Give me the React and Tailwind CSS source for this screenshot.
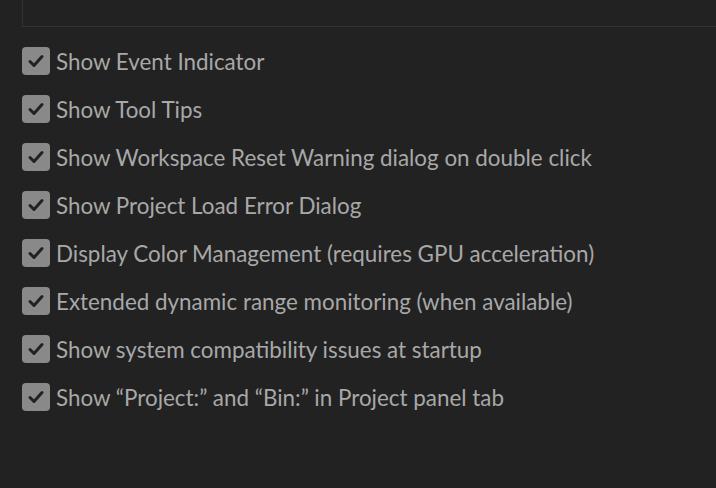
import React from 'react';

const items = [
  'Show Event Indicator',
  'Show Tool Tips',
  'Show Workspace Reset Warning dialog on double click',
  'Show Project Load Error Dialog',
  'Display Color Management (requires GPU acceleration)',
  'Extended dynamic range monitoring (when available)',
  'Show system compatibility issues at startup',
  'Show \u201cProject:\u201d and \u201cBin:\u201d in Project panel tab',
];

const CheckBox = () => (
  <span className="w-[28px] h-[28px] rounded-[4px] bg-[#898989] flex items-center justify-center shrink-0">
    <svg width="18" height="18" viewBox="0 0 18 18" fill="none">
      <path d="M3 9.5 L7 13.5 L15 4.5" stroke="#222222" strokeWidth="3" strokeLinecap="round" strokeLinejoin="round" />
    </svg>
  </span>
);

export default function App() {
  return (
    <div className="w-[716px] h-[488px] bg-[#222222] overflow-hidden" style={{ fontFamily: 'Lato, "Open Sans", sans-serif' }}>
      <div className="ml-[22px] h-[27px] border-l border-b border-[#333333]" />
      <div className="pt-[10px] pl-[22px] flex flex-col">
        {items.map((t, i) => (
          <label key={i} className="h-[48px] flex items-center gap-[6px]">
            <CheckBox />
            <span className="pt-[2px] text-[22.4px] leading-none text-[#a8a8a8] whitespace-nowrap">{t}</span>
          </label>
        ))}
      </div>
    </div>
  );
}
